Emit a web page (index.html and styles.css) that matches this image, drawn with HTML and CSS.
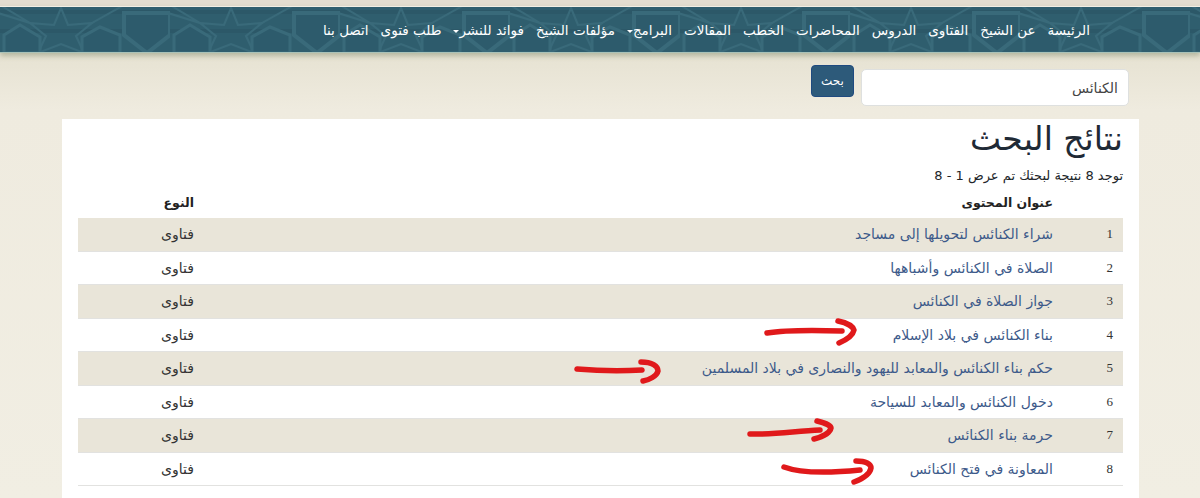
FILE: index.html
```html
<!DOCTYPE html>
<html lang="ar" dir="rtl">
<head>
  <meta charset="UTF-8" />
  <title>نتائج البحث</title>
  <link rel="stylesheet" href="styles.css">
</head>
<body>
  <header class="topbar">
    <svg class="topbar-pattern" width="100%" height="45" aria-hidden="true">
      <defs>
        <pattern id="girih" x="0" y="0" width="170" height="45" patternUnits="userSpaceOnUse">
          <rect y="22" width="170" height="4" fill="#2c5868" />
          <rect y="3" width="170" height="4" fill="#2c5868" />
          <g fill="none" stroke="#396a7a" stroke-width="2">
            <polygon points="61,1 68,18 92,16 76,29 84,46 61,37 38,46 46,29 30,16 54,18" />
            <polygon fill="#2d5b6c" stroke-width="4" points="124,6 170,6 170,28 147,46 124,28" />
            <polygon fill="#2d5b6c" stroke-width="3" points="82,46 82,30 100,20 120,28 120,46" />
            <polygon fill="#2d5b6c" stroke-width="3" points="4,46 4,28 20,18 40,30 40,46" />
            <path d="M92,16 L124,-2 M170,6 L190,-4 M30,16 L0,-2 M-2,6 L30,16" />
          </g>
        </pattern>
      </defs>
      <rect width="100%" height="45" fill="url(#girih)" />
    </svg>
    <nav class="nav">
      <a href="#">الرئيسة</a>
      <a href="#">عن الشيخ</a>
      <a href="#">الفتاوى</a>
      <a href="#">الدروس</a>
      <a href="#">المحاضرات</a>
      <a href="#">الخطب</a>
      <a href="#">المقالات</a>
      <a href="#" class="caret">البرامج</a>
      <a href="#">مؤلفات الشيخ</a>
      <a href="#" class="caret">فوائد للنشر</a>
      <a href="#">طلب فتوى</a>
      <a href="#">اتصل بنا</a>
    </nav>
  </header>

  <form class="search">
    <input class="search-input" type="text" value="الكنائس">
    <button class="search-btn" type="button">بحث</button>
  </form>

  <main class="results">
    <h1 class="results-title">نتائج البحث</h1>
    <p class="results-count">توجد 8 نتيجة لبحثك تم عرض 1 - 8</p>
    <table class="results-table">
      <thead>
        <tr><th class="col-num"></th><th>عنوان المحتوى</th><th class="col-type">النوع</th></tr>
      </thead>
      <tbody>
        <tr><td class="col-num">1</td><td><a href="#">شراء الكنائس لتحويلها إلى مساجد</a></td><td>فتاوى</td></tr>
        <tr><td class="col-num">2</td><td><a href="#">الصلاة في الكنائس وأشباهها</a></td><td>فتاوى</td></tr>
        <tr><td class="col-num">3</td><td><a href="#">جواز الصلاة في الكنائس</a></td><td>فتاوى</td></tr>
        <tr><td class="col-num">4</td><td><a href="#">بناء الكنائس في بلاد الإسلام</a></td><td>فتاوى</td></tr>
        <tr><td class="col-num">5</td><td><a href="#">حكم بناء الكنائس والمعابد لليهود والنصارى في بلاد المسلمين</a></td><td>فتاوى</td></tr>
        <tr><td class="col-num">6</td><td><a href="#">دخول الكنائس والمعابد للسياحة</a></td><td>فتاوى</td></tr>
        <tr><td class="col-num">7</td><td><a href="#">حرمة بناء الكنائس</a></td><td>فتاوى</td></tr>
        <tr><td class="col-num">8</td><td><a href="#">المعاونة في فتح الكنائس</a></td><td>فتاوى</td></tr>
      </tbody>
    </table>
  </main>

  <!-- red marker arrows drawn over the screenshot -->
  <svg class="marks" width="1200" height="498" aria-hidden="true">
    <g fill="none" stroke="#e0191b" stroke-width="5.5" stroke-linecap="round" stroke-linejoin="round">
      <path d="M767,333 C785,330 810,330 842,331" />
      <path d="M838,321 C848,323 853,327 854,330 C853,335 846,340 839,343" />
      <path d="M577,369 C600,371 625,371 642,370" />
      <path d="M641,362 C652,362 658,366 658,371 C657,376 649,380 643,381" />
      <path d="M750,434 C775,435 795,431 820,430" />
      <path d="M817,421 C826,423 831,426 831,428 C830,433 822,437 814,439" />
      <path d="M784,467 C800,473 830,473 860,470" />
      <path d="M856,461 C866,461 871,464 871,468 C870,474 862,479 854,482" />
    </g>
  </svg>
</body>
</html>
```

FILE: styles.css
```css
body {
  margin: 0;
  height: 498px;
  overflow: hidden;
  position: relative;
  font-family: "DejaVu Sans", sans-serif;
  font-size: 14px;
  color: #212529;
  background: linear-gradient(#e3ddd0 0, #e3ddd0 6px, #e6e2d2 53px, #efebdf 110px, #f1eee3 100%);
  padding-top: 6px;
  box-sizing: border-box;
}

.topbar {
  position: relative;
  height: 45px;
  background-color: #2f5e6e;
  border-top: 1px solid #f3efe4;
  border-bottom: 1px solid #a9c2b8;
  box-shadow: 0 3px 5px rgba(120, 130, 100, 0.45);
}

.topbar-pattern {
  position: absolute;
  top: 0;
  left: 0;
}

.nav {
  position: relative;
  display: flex;
  align-items: center;
  height: 45px;
  padding-right: 104px;
  font-size: 13.5px;
}

.nav a {
  color: #fff;
  text-decoration: none;
  padding: 0 6px;
  white-space: nowrap;
}

.nav .caret::after {
  content: '';
  display: inline-block;
  border-top: 3px solid #fff;
  border-left: 3px solid transparent;
  border-right: 3px solid transparent;
  vertical-align: 2px;
}

.search {
  display: flex;
  align-items: flex-start;
  gap: 7px;
  padding: 12px 71px 0 0;
  height: 54px;
}

.search-input {
  width: 268px;
  height: 37px;
  margin-top: 4px;
  box-sizing: border-box;
  padding: 0 10px;
  border: 1px solid #dee0df;
  border-radius: 5px;
  background: #fff;
  font-family: inherit;
  font-size: 14px;
  color: #444;
}

.search-btn {
  width: 43px;
  height: 32px;
  border: 1px solid #1f4a80;
  border-radius: 4px;
  background: #2d5a7a;
  color: #fff;
  font-family: inherit;
  font-size: 12px;
}

.results {
  width: 1045px;
  margin: 0 61px 0 62px;
  padding: 0 16px;
  background: #fff;
  height: 400px;
}

.results-title {
  margin: 0;
  font-size: 33px;
  font-weight: 400;
  line-height: 40px;
  color: #1f2a36;
}

.results-count {
  margin: 7px 0 0;
  font-size: 13px;
  line-height: 20px;
}

.results-table {
  width: 100%;
  border-collapse: collapse;
  table-layout: fixed;
}

.results-table th {
  height: 32px;
  padding: 0 12px;
  text-align: right;
  font-size: 12.5px;
  font-weight: 700;
  color: #222;
}

.results-table td {
  height: 32.5px;
  padding: 0 12px;
  border-bottom: 1px solid #e2e2e0;
  color: #333;
}

.results-table tbody tr:nth-child(odd) td {
  background: #e9e5d9;
}

.results-table a {
  color: #3d5a8a;
  text-decoration: none;
}

.col-num {
  width: 34px;
}

td.col-num {
  font-family: "Liberation Serif", serif;
  font-size: 13px;
  padding: 0 10px;
}

.col-type {
  width: 104px;
}

.marks {
  position: absolute;
  top: 0;
  left: 0;
}
```
